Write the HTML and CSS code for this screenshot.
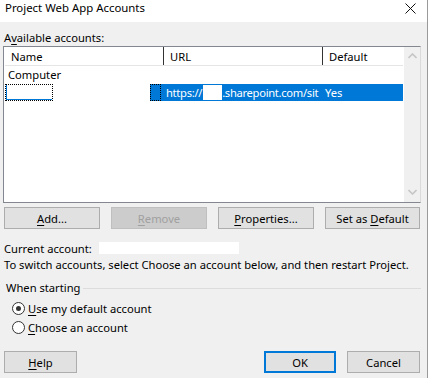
FILE: index.html
```html
<!DOCTYPE html>
<html lang="en">
<head>
  <meta charset="UTF-8" />
  <title>Project Web App Accounts</title>
  <link rel="stylesheet" href="styles.css">
</head>
<body>
  <div class="window">
    <!-- Title bar -->
    <div class="titlebar">
      <span class="title">Project Web App Accounts</span>
      <svg class="close" width="11" height="11" viewBox="0 0 11 11">
        <path d="M0.5 0.5 L10.5 10.5 M10.5 0.5 L0.5 10.5" stroke="#111" stroke-width="1" fill="none"/>
      </svg>
    </div>

    <div class="content">
      <div class="caption">A<u>v</u>ailable accounts:</div>

      <!-- Accounts list -->
      <div class="listbox">
        <div class="list">
          <div class="list-header">
            <div class="col col-name">Name</div>
            <div class="col col-url">URL</div>
            <div class="col col-default">Default</div>
          </div>
          <div class="list-row">
            <div class="cell cell-name">Computer</div>
          </div>
          <div class="list-row selected">
            <div class="cell cell-name"><span class="focus-box"><span class="blank-name"></span></span></div>
            <div class="cell cell-url"><span class="sel-focus"></span>https://<span class="blank-host"></span>.sharepoint.com/sit</div>
            <div class="cell cell-default">Yes</div>
          </div>
        </div>
        <div class="scrollbar">
          <svg width="9" height="6" viewBox="0 0 9 6"><path d="M0.5 5 L4.5 1 L8.5 5" stroke="#c6c6c6" stroke-width="1.6" fill="none"/></svg>
          <svg width="9" height="6" viewBox="0 0 9 6"><path d="M0.5 1 L4.5 5 L8.5 1" stroke="#c6c6c6" stroke-width="1.6" fill="none"/></svg>
        </div>
      </div>

      <div class="button-row">
        <button class="btn wide"><u>A</u>dd...</button>
        <button class="btn wide" disabled><u>R</u>emove</button>
        <button class="btn wide"><u>P</u>roperties...</button>
        <button class="btn wide last">Set as <u>D</u>efault</button>
      </div>

      <div class="info">
        <div class="current">Current account: <span class="blank-account"></span></div>
        <div>To switch accounts, select Choose an account below, and then restart Project.</div>
      </div>

      <!-- Startup options -->
      <div class="group">
        <div class="group-title"><span>When starting</span></div>
        <label class="radio"><span class="dot checked"></span><span><u>U</u>se my default account</span></label>
        <label class="radio"><span class="dot"></span><span><u>C</u>hoose an account</span></label>
      </div>

      <div class="footer">
        <button class="btn small"><u>H</u>elp</button>
        <div class="footer-right">
          <button class="btn small default">OK</button>
          <button class="btn small">Cancel</button>
        </div>
      </div>
    </div>
  </div>
</body>
</html>
```

FILE: styles.css
```css
body {
  margin: 0;
  background-color: #ffffff;
  font-family: "Noto Sans", "Open Sans", sans-serif;
  font-size: 11.2px;
  color: #000;
}
u {
  text-decoration: underline;
  text-underline-offset: 2px;
}
.window {
  width: 427px;
  height: 378px;
  background-color: #f0f0f0;
  border-right: 1px solid #9a9a9a;
  overflow: hidden;
}
.titlebar {
  height: 22px;
  background-color: #ffffff;
  display: flex;
  justify-content: space-between;
  align-items: flex-start;
  padding: 0 11px 0 5px;
}
.title {
  font-size: 11.4px;
  line-height: 16px;
}
.close {
  margin-top: 3px;
}
.content {
  padding: 7px 0 0 3px;
}
.caption {
  line-height: 17px;
  padding-left: 1px;
}
.listbox {
  width: 416px;
  height: 155px;
  border: 1px solid #828790;
  border-right-color: #dadada;
  background-color: #fff;
  display: flex;
}
.list {
  flex: 1;
  padding-left: 1px;
}
.list-header {
  display: flex;
  height: 18px;
  border-bottom: 1px solid #e5e5e5;
  line-height: 19px;
}
.col {
  padding-left: 6px;
  border-right: 1px solid #333;
  box-sizing: border-box;
}
.col-name {
  width: 159px;
}
.col-url {
  width: 159px;
}
.col-default {
  flex: 1;
  border-right: none;
}
.list-row {
  display: flex;
  height: 17px;
  line-height: 17px;
  margin-bottom: 1px;
}
.cell-name {
  padding-left: 3px;
}
.selected .cell-name {
  width: 145px;
  padding: 0;
}
.focus-box {
  display: inline-block;
  width: 48px;
  height: 17px;
  outline: 1px dotted #000;
  outline-offset: -1px;
  padding: 1px 0 0 1px;
  box-sizing: border-box;
}
.blank-name {
  display: block;
  width: 46px;
  height: 15px;
  background-color: #fff;
  border-bottom: 1px solid #0078d7;
  border-left: 1px solid #0078d7;
  box-sizing: border-box;
}
.cell-url {
  width: 172px;
  background-color: #0078d7;
  color: #fff;
  white-space: nowrap;
  overflow: hidden;
  display: flex;
  letter-spacing: -0.3px;
}
.sel-focus {
  flex: none;
  width: 11px;
  height: 17px;
  box-sizing: border-box;
  border: 1px dotted #000;
  margin-right: 5px;
}
.blank-host {
  flex: none;
  display: inline-block;
  width: 19px;
  height: 15px;
  background-color: #fff;
  margin: 1px 0 0 1px;
}
.cell-default {
  flex: 1;
  background-color: #0078d7;
  color: #fff;
  padding-left: 3px;
}
.scrollbar {
  width: 16px;
  background-color: #f0f0f0;
  border-left: 1px solid #fff;
  display: flex;
  flex-direction: column;
  justify-content: space-between;
  align-items: center;
  padding: 6px 0 7px;
}
.button-row {
  display: flex;
  gap: 11px;
  margin-top: 4px;
  padding-left: 1px;
}
.btn {
  height: 22px;
  background-color: #e1e1e1;
  border: 1px solid #adadad;
  font-family: inherit;
  font-size: 11.2px;
  color: #000;
  padding: 0;
}
.btn.wide {
  width: 96px;
}
.btn.wide.last {
  width: 95px;
}
.btn.small {
  width: 73px;
}
.btn:disabled {
  background-color: #cccccc;
  border-color: #bfbfbf;
  color: #a0a0a0;
}
.btn.default {
  width: 72px;
  border: 2px solid #0078d7;
}
.info {
  margin-top: 12px;
  line-height: 16px;
  padding-left: 1px;
}
.blank-account {
  display: inline-block;
  width: 140px;
  height: 12px;
  background-color: #fff;
  vertical-align: -1px;
  margin-left: 4px;
}
.group {
  margin-top: 7px;
  width: 418px;
}
.group-title {
  display: flex;
  align-items: center;
  gap: 3px;
  line-height: 16px;
  padding-left: 3px;
}
.group-title::after {
  content: "";
  flex: 1;
  border-top: 1px solid #dcdcdc;
}
.radio {
  display: flex;
  align-items: center;
  gap: 3px;
  padding-left: 9px;
  height: 19px;
}
.radio:first-of-type {
  margin-top: 3px;
}
.dot {
  width: 11px;
  height: 11px;
  border: 1px solid #333;
  border-radius: 50%;
  background-color: #fff;
  position: relative;
}
.dot.checked::after {
  content: "";
  position: absolute;
  left: 3px;
  top: 3px;
  width: 5px;
  height: 5px;
  border-radius: 50%;
  background-color: #333;
}
.footer {
  display: flex;
  justify-content: space-between;
  margin-top: 14px;
  padding-left: 1px;
  width: 416px;
}
.footer-right {
  display: flex;
  gap: 11px;
}
```
